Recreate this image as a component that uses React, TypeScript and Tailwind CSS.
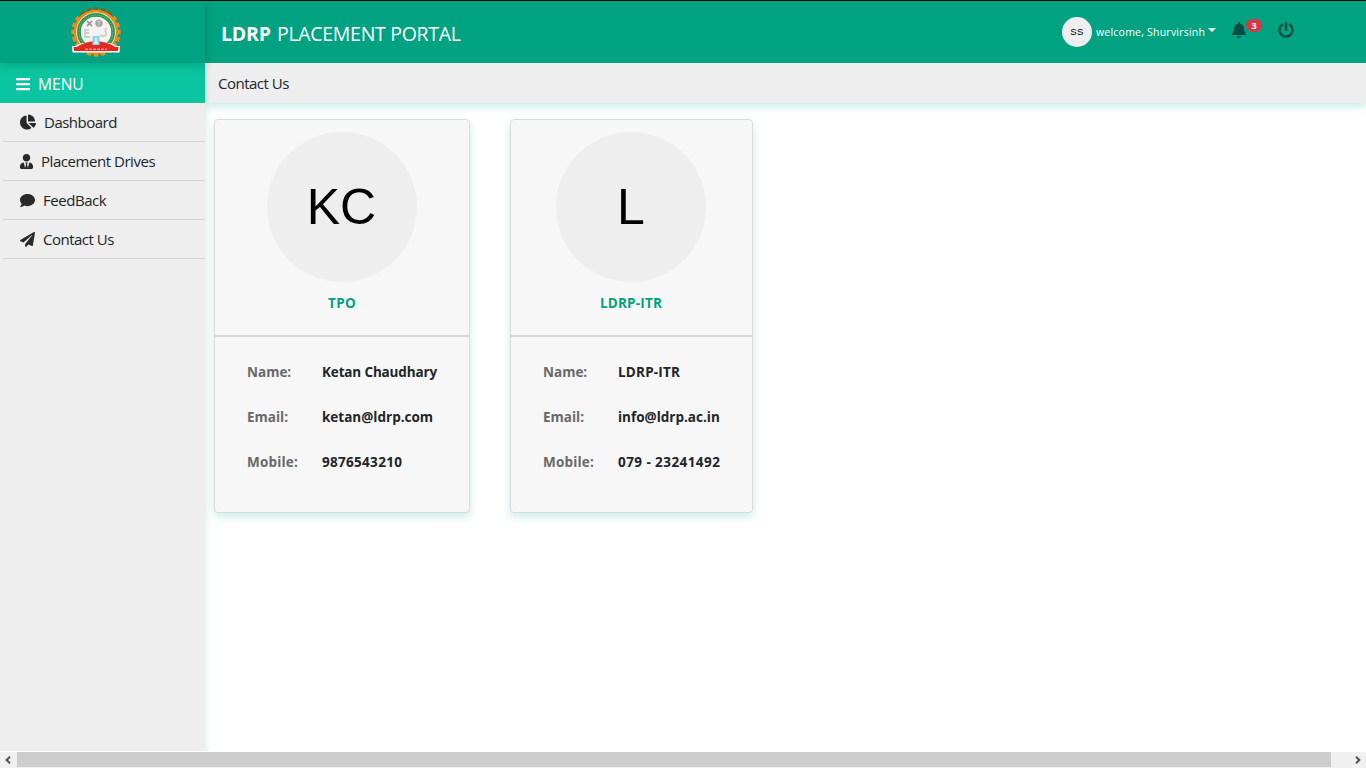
import type { ReactNode } from "react";
import {
  FaBars,
  FaBell,
  FaChartPie,
  FaComment,
  FaPaperPlane,
  FaPowerOff,
  FaUserTie,
} from "react-icons/fa";

const teeth = Array.from({ length: 20 }, (_, i) => i * 18);

function Logo() {
  return (
    <svg width="50" height="50" viewBox="0 0 50 50" className="block">
      {teeth.map((a) => (
        <rect
          key={a}
          x="22.7"
          y="0.4"
          width="4.6"
          height="5"
          fill={a < 40 || a > 320 ? "#8a5a1c" : "#f08a16"}
          transform={`rotate(${a} 25 25)`}
        />
      ))}
      <circle cx="25" cy="25" r="22.2" fill="#f08a16" />
      <circle cx="25" cy="25" r="19.8" fill="#f6f3ec" />
      <circle cx="25" cy="25" r="17" fill="none" stroke="#2a9350" strokeWidth="4" />
      <circle cx="25" cy="25" r="17" fill="none" stroke="#8cc79c" strokeWidth="1" strokeDasharray="1.2 1.1" />
      <circle cx="25" cy="25" r="15.2" fill="#f4f2f0" />
      <path d="M16 14l5 5M21 14l-5 5" stroke="#8d8d8d" strokeWidth="1.5" />
      <circle cx="28" cy="16.3" r="3.7" fill="#aaa69f" />
      <path d="M26 14.5h4M28 14v5" stroke="#dedbd5" strokeWidth="0.7" />
      <path d="M18 23h-4v7h5M14 26h4M36 21c-2 1-2 3-1 5c1 3-4 4-6 2" fill="none" stroke="#d0cdc9" strokeWidth="1.8" />
      <path d="M8 37Q25 32 42 37L49 41H1Z" fill="#fff" />
      <path d="M6 39.5Q25 29 44 39.5L45 40.5H5Z" fill="#dd2c22" />
      <rect x="21.5" y="29" width="7" height="9" fill="#8fd0ee" />
      <path d="M25 30.5v5M23 36h4" stroke="#e8f7fd" strokeWidth="1.4" />
      <path d="M1 39H5L7 40H43L45 39H49L48.5 45.5H1.5Z" fill="#fff" />
      <path d="M2.5 40H47.5L47 44H3Z" fill="#e5281e" />
      <path d="M14 42.2h22" stroke="#f9c7b8" strokeWidth="1" strokeDasharray="3 1" />
    </svg>
  );
}

function NavItem({ icon, label, cls }: { icon: ReactNode; label: string; cls: string }) {
  return (
    <a className="ml-[3px] flex h-[39px] items-center border-b border-[#d3d3d3] pl-[17px] text-[#292929]">
      {icon}
      <span className={`whitespace-nowrap text-[15px] text-[#212529] ${cls}`}>{label}</span>
    </a>
  );
}

type Row = { label: string; value: string; labelCls: string; valueCls: string };

function Card({ width, initials, title, titleCls, rows }: { width: string; initials: string; title: string; titleCls: string; rows: Row[] }) {
  return (
    <section className={`h-[394px] shrink-0 rounded border border-[#d9dcdb] bg-[#f7f7f7] shadow-[0_4px_8px_0_rgba(0,162,129,0.2)] ${width}`}>
      <div className="flex h-[217px] flex-col items-center border-b-2 border-[#d8d8d8] pt-3 pr-px">
        <div className="flex size-[150px] items-center justify-center rounded-full bg-[#eee] text-[50px] leading-none text-black">
          <span className="font-['Liberation_Sans',sans-serif]">{initials}</span>
        </div>
        <h2 className={`mt-[11px] text-[13.5px] leading-5 font-bold text-[#00a281] ${titleCls}`}>{title}</h2>
      </div>
      <dl className="flex flex-col pt-[13px] pl-8">
        {rows.map((r) => (
          <div key={r.label} className="flex h-[45px] items-center text-[13.5px] font-bold whitespace-nowrap">
            <dt className="w-[75px] text-[#686868]">
              <span className={r.labelCls}>{r.label}</span>
            </dt>
            <dd className="text-[#212529]">
              <span className={r.valueCls}>{r.value}</span>
            </dd>
          </div>
        ))}
      </dl>
    </section>
  );
}

export default function App() {
  return (
    <div className="flex h-[768px] w-[1366px] flex-col overflow-hidden border-t border-black bg-white font-['Open_Sans','Noto_Sans',sans-serif]">
      <div className="flex h-[750px] shrink-0">
        <aside className="relative z-10 flex w-[205px] shrink-0 flex-col bg-[#eee] shadow-[0_4px_8px_0_rgba(0,162,129,0.2)]">
          <div className="z-10 flex h-[62px] shrink-0 items-center justify-center bg-[#00a281] pr-[13px] pb-px shadow-[0_4px_8px_0_rgba(0,0,0,0.15)]">
            <Logo />
          </div>
          <div className="flex h-10 shrink-0 items-center bg-[#0bc5a0] pt-[2px] pl-[15px] text-white">
            <FaBars size={16} className="-mt-px" />
            <span className="ml-[7px] pt-px text-[15.5px] tracking-[0.05px]">MENU</span>
          </div>
          <nav className="flex flex-col">
            <NavItem icon={<FaChartPie size={16} />} label="Dashboard" cls="ml-2 tracking-[-0.5px]" />
            <NavItem icon={<FaUserTie size={15} className="-ml-px" />} label="Placement Drives" cls="ml-[7px] tracking-[-0.45px]" />
            <NavItem icon={<FaComment size={15} />} label="FeedBack" cls="ml-2 tracking-[-0.45px]" />
            <NavItem icon={<FaPaperPlane size={15} />} label="Contact Us" cls="ml-2 tracking-[-0.5px]" />
          </nav>
        </aside>
        <div className="flex grow flex-col">
          <header className="flex h-[62px] shrink-0 items-center justify-between bg-[#00a281] pr-[72px] pl-4 text-white">
            <h1 className="flex pt-[4px] text-[19.5px] leading-7 whitespace-nowrap">
              <b className="w-[56px] tracking-[-0.2px]">LDRP</b>
              <span className="tracking-[-0.3px]">PLACEMENT PORTAL</span>
            </h1>
            <div className="flex h-full items-start">
              <div className="mt-4 flex size-[30px] items-center justify-center rounded-full bg-[#eee] pt-px font-['Liberation_Sans',sans-serif] text-[9.5px] tracking-[0.4px] text-black">
                SS
              </div>
              <span className="mt-[22px] ml-1 w-[109px] text-[10.5px] leading-[18px] font-medium tracking-[0.22px] whitespace-nowrap">welcome, Shurvirsinh</span>
              <svg width="8" height="4" viewBox="0 0 8 4" className="mt-[27px] ml-[3px]">
                <path d="M0 0h8L4 4z" fill="#fff" />
              </svg>
              <FaBell size={16} className="mt-[21px] ml-[15px] text-[#064e3f]" />
              <span className="mt-[18px] -ml-px flex h-[13px] w-4 items-center justify-center rounded-full bg-[#dc3545] text-[9px] font-bold">3</span>
              <FaPowerOff size={16} className="mt-[21px] ml-4 text-[#064e3f]" />
            </div>
          </header>
          <div className="flex h-10 shrink-0 items-center bg-[#eee] pl-[13px] text-[15px] text-[#212529] shadow-[0_4px_8px_0_rgba(0,162,129,0.2)]">
            <span className="tracking-[-0.5px]">Contact Us</span>
          </div>
          <main className="flex gap-10 pt-4 pl-[9px]">
            <Card
              width="w-[256px]"
              initials="KC"
              title="TPO"
              titleCls="tracking-[0.3px] pl-px"
              rows={[
                { label: "Name:", value: "Ketan Chaudhary", labelCls: "", valueCls: "tracking-[-0.15px]" },
                { label: "Email:", value: "ketan@ldrp.com", labelCls: "", valueCls: "" },
                { label: "Mobile:", value: "9876543210", labelCls: "tracking-[0.2px]", valueCls: "tracking-[0.3px]" },
              ]}
            />
            <Card
              width="w-[243px]"
              initials="L"
              title="LDRP-ITR"
              titleCls="tracking-[0.2px]"
              rows={[
                { label: "Name:", value: "LDRP-ITR", labelCls: "", valueCls: "tracking-[0.2px]" },
                { label: "Email:", value: "info@ldrp.ac.in", labelCls: "", valueCls: "" },
                { label: "Mobile:", value: "079 - 23241492", labelCls: "tracking-[0.2px]", valueCls: "tracking-[0.43px]" },
              ]}
            />
          </main>
        </div>
      </div>
      <div className="z-20 flex h-[17px] shrink-0 items-start border-t border-white bg-[#f0f0f0]">
        <div className="flex h-[15px] w-[17px] items-center justify-center pr-[2px]">
          <svg width="6" height="8" viewBox="0 0 6 8">
            <path d="M5 0.8L1.6 4L5 7.2" fill="none" stroke="#505050" strokeWidth="1.9" />
          </svg>
        </div>
        <div className="h-[15px] w-[1314px] bg-[#cdcdcd]" />
        <div className="flex h-[15px] grow items-center justify-end pr-[5px]">
          <svg width="6" height="8" viewBox="0 0 6 8">
            <path d="M1 0.8L4.4 4L1 7.2" fill="none" stroke="#505050" strokeWidth="1.9" />
          </svg>
        </div>
      </div>
    </div>
  );
}
